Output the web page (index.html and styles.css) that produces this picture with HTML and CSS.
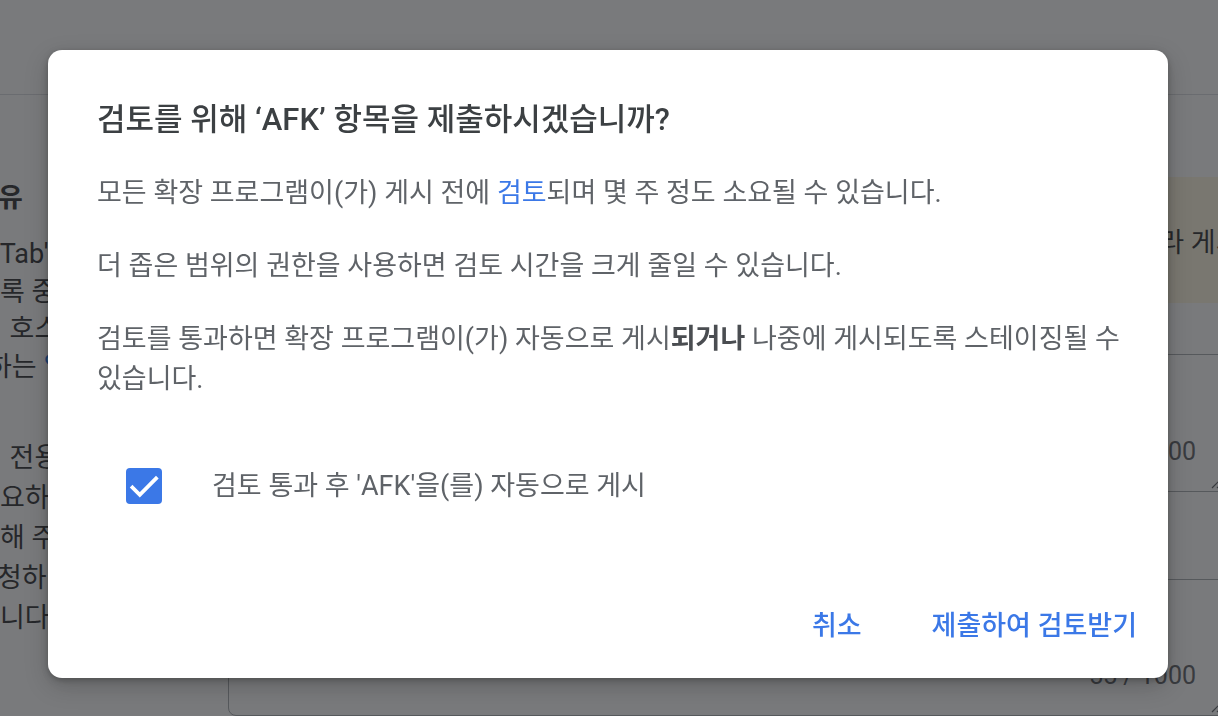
FILE: index.html
```html
<!DOCTYPE html>
<html lang="ko">
<head>
<meta charset="utf-8">
<title>검토 제출</title>
<link rel="stylesheet" href="styles.css">
</head>
<body>
<div class="page">
  <header class="topbar"></header>
  <main class="main">
    <aside class="side">
      <div class="side-head">유</div>
      <div class="side-para">
        <div class="line cut-s">'Tab'과</div>
        <div class="line">록 중요</div>
        <div class="line cut-m">이 호스트</div>
        <div class="line cut-t">하는 <span class="link">알림</span></div>
      </div>
      <div class="side-para side-para-2">
        <div class="line cut-m">의 전용</div>
        <div class="line">요하기</div>
        <div class="line">해 주</div>
        <div class="line cut-x">청하면</div>
        <div class="line">니다.</div>
      </div>
    </aside>
    <section class="content">
      <div class="notice">제출한 항목은 검토가 완료되면 이메일로 알림을 보내 드리며, 검토 결과에 따라 게시됩니다.</div>
      <div class="field field-1">
        <span class="counter">0 / 1000</span>
        <svg class="grip" width="12" height="12" viewBox="0 0 12 12"><path d="M11 3 L3 11 M11 8 L8 11" stroke="#5f6368" stroke-width="1.2" fill="none"/></svg>
      </div>
      <div class="field field-2">
        <span class="counter">55 / 1000</span>
        <svg class="grip" width="12" height="12" viewBox="0 0 12 12"><path d="M11 3 L3 11 M11 8 L8 11" stroke="#5f6368" stroke-width="1.2" fill="none"/></svg>
      </div>
    </section>
  </main>
</div>

<div class="scrim"></div>

<div class="dialog" role="dialog" aria-modal="true">
  <h2 class="dialog-title">검토를 위해 ‘AFK’ 항목을 제출하시겠습니까?</h2>
  <p class="dialog-text">모든 확장 프로그램이(가) 게시 전에 <a class="dialog-link">검토</a>되며 몇 주 정도 소요될 수 있습니다.</p>
  <p class="dialog-text">더 좁은 범위의 권한을 사용하면 검토 시간을 크게 줄일 수 있습니다.</p>
  <p class="dialog-text">검토를 통과하면 확장 프로그램이(가) 자동으로 게시<b>되거나</b> 나중에 게시되도록 스테이징될 수 있습니다.</p>
  <label class="check-row">
    <span class="checkbox">
      <svg width="36" height="36" viewBox="0 0 36 36"><path d="M6.5 19.5 L13.8 26.8 L30 10.5" stroke="#fff" stroke-width="3.8" fill="none" stroke-linecap="square"/></svg>
    </span>
    <span class="check-label">검토 통과 후 'AFK'을(를) 자동으로 게시</span>
  </label>
  <div class="actions">
    <button class="btn">취소</button>
    <button class="btn">제출하여 검토받기</button>
  </div>
</div>
</body>
</html>
```
FILE: styles.css
```css
* { box-sizing: border-box; }

html, body {
  margin: 0;
  padding: 0;
}

body {
  width: 1218px;
  height: 716px;
  overflow: hidden;
  background: #ffffff;
  font-family: Roboto, "Noto Sans CJK KR", sans-serif;
  color: #3c4043;
}

.page {
  height: 716px;
  display: flex;
  flex-direction: column;
}

.topbar {
  flex: none;
  height: 95px;
  border-bottom: 1px solid #dadce0;
}

.main {
  flex: 1;
  display: flex;
  min-height: 0;
}

/* left column (scrolled partly out of view) */
.side {
  flex: none;
  width: 228px;
  padding-top: 84px;
  font-size: 27px;
  white-space: nowrap;
  overflow: hidden;
  color: #303134;
}

.side-head {
  font-weight: 700;
  line-height: 38px;
  margin-left: -2px;
}

.side-para {
  margin-top: 19px;
  line-height: 37.5px;
}

.side-para-2 {
  margin-top: 52px;
  line-height: 40px;
}

.cut-s { margin-left: -5px; }
.cut-m { margin-left: -22px; }
.cut-t { margin-left: -13px; }
.cut-x { margin-left: -3px; }

.link { color: #1a73e8; }

/* right column */
.content {
  flex: none;
  width: 1004px;
  padding-top: 82px;
  display: flex;
  flex-direction: column;
}

.notice {
  height: 126px;
  background: #fef7e0;
  display: flex;
  align-items: center;
  padding-left: 89px;
  font-size: 27px;
  white-space: nowrap;
  overflow: hidden;
  color: #303134;
}

.field {
  position: relative;
  border: 1px solid #a8acb0;
  border-radius: 8px;
  display: flex;
  align-items: flex-end;
  justify-content: flex-end;
  padding: 0 35px 24px 0;
}

.field-1 {
  margin-top: 51px;
  height: 138px;
}

.field-2 {
  margin-top: 87px;
  height: 137px;
}

.counter {
  font-size: 25px;
  line-height: 30px;
  color: #5f6368;
}

.grip {
  position: absolute;
  right: 10px;
  bottom: 2px;
}

/* modal */
.scrim {
  position: fixed;
  inset: 0;
  background: rgba(32, 33, 36, 0.6);
}

.dialog {
  position: fixed;
  left: 48px;
  top: 50px;
  width: 1120px;
  height: 628px;
  background: #ffffff;
  border-radius: 14px;
  box-shadow: 0 2px 6px rgba(0, 0, 0, 0.25), 0 8px 24px rgba(0, 0, 0, 0.2);
  padding: 52px 23px 28px 49px;
  display: flex;
  flex-direction: column;
}

.dialog-title {
  margin: 0;
  font-size: 31px;
  line-height: 36px;
  font-weight: 500;
  color: #3c4043;
}

.dialog-text {
  margin: 33px 0 0;
  font-size: 27px;
  line-height: 40px;
  color: #5f6368;
}

.dialog-text:first-of-type {
  margin-top: 35px;
}

.dialog-text b {
  font-weight: 700;
  color: #4a4d51;
}

.dialog-link {
  color: #3b78e7;
  text-decoration: none;
}

.check-row {
  margin-top: 69px;
  padding-left: 29px;
  display: flex;
  align-items: center;
  height: 36px;
}

.checkbox {
  flex: none;
  width: 36px;
  height: 36px;
  border-radius: 4px;
  background: #3b78e7;
  display: flex;
}

.check-label {
  margin-left: 50px;
  font-size: 27px;
  color: #5f6368;
  line-height: 36px;
}

.actions {
  margin-top: auto;
  display: flex;
  justify-content: flex-end;
  gap: 54px;
}

.btn {
  font-family: Roboto, "Noto Sans CJK KR", sans-serif;
  font-size: 27px;
  font-weight: 500;
  line-height: 48px;
  height: 48px;
  padding: 0 8px;
  border: 0;
  background: transparent;
  color: #3b78e7;
}
```
